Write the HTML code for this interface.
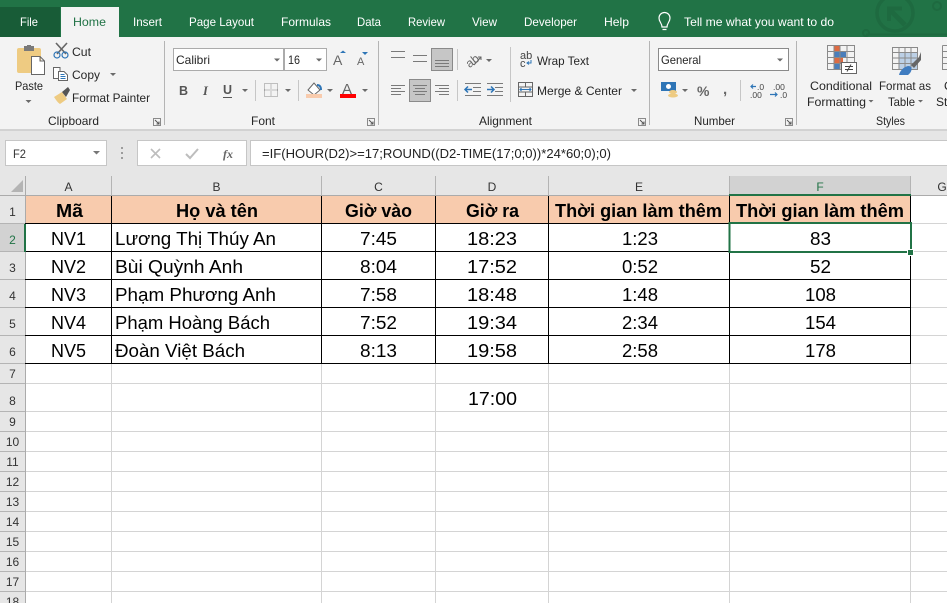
<!DOCTYPE html>
<html><head><meta charset="utf-8"><style>
html,body{margin:0;padding:0;background:#fff;width:947px;height:603px;overflow:hidden}
svg{display:block}
text{font-family:"Liberation Sans",sans-serif}
.t{font-size:12px;fill:#fff}
.r{font-size:12px;fill:#262626}
.c{font-size:18.5px;fill:#000}
.b{font-size:18.5px;fill:#000;font-weight:bold}
.h{font-size:12px;fill:#333;text-anchor:middle}
.ic{fill:none;stroke:#7a7a7a;stroke-width:1}
.sep{stroke:#c6c6c6;stroke-width:1}
.sep2{stroke:#b4b4b4;stroke-width:1}
.ar{fill:#6a6a6a}
</style></head><body>
<svg width="947" height="603" viewBox="0 0 947 603" xmlns="http://www.w3.org/2000/svg">
<rect width="947" height="603" fill="#fff"/>
<!-- title tabs -->
<rect width="947" height="37" fill="#217346"/>
<rect x="0" y="7" width="60" height="30" fill="#185c37"/>
<rect x="61" y="7" width="58" height="30" fill="#f3f3f3"/>
<g fill="none" stroke="#1e6a40" stroke-width="3.5">
<circle cx="895" cy="13" r="18"/><path d="M890 10 L905 25" stroke-width="5"/><path d="M889 21 V8.500 H902" stroke-width="4"/>
<path d="M866 34.500 H947" stroke-width="2"/><circle cx="866" cy="33" r="3" stroke-width="2"/><circle cx="937" cy="6" r="4" stroke-width="2"/>
</g>
<text class="t" x="20" y="26" textLength="18" lengthAdjust="spacingAndGlyphs">File</text>
<text class="t" x="73" y="26" textLength="33" lengthAdjust="spacingAndGlyphs" style="fill:#217346">Home</text>
<text class="t" x="133" y="26" textLength="29" lengthAdjust="spacingAndGlyphs">Insert</text>
<text class="t" x="189" y="26" textLength="65" lengthAdjust="spacingAndGlyphs">Page Layout</text>
<text class="t" x="281" y="26" textLength="50" lengthAdjust="spacingAndGlyphs">Formulas</text>
<text class="t" x="357" y="26" textLength="24" lengthAdjust="spacingAndGlyphs">Data</text>
<text class="t" x="408" y="26" textLength="37" lengthAdjust="spacingAndGlyphs">Review</text>
<text class="t" x="472" y="26" textLength="25" lengthAdjust="spacingAndGlyphs">View</text>
<text class="t" x="524" y="26" textLength="53" lengthAdjust="spacingAndGlyphs">Developer</text>
<text class="t" x="604" y="26" textLength="25" lengthAdjust="spacingAndGlyphs">Help</text>
<text class="t" x="684" y="26" textLength="150" lengthAdjust="spacingAndGlyphs">Tell me what you want to do</text>
<path d="M662 27 C662 23 659 22 659 18 A5.500 5.500 0 0 1 670 18 C670 22 667 23 667 27 Z M662.500 29.500 H666.500" fill="none" stroke="#fff" stroke-width="1.200"/>
<!-- ribbon -->
<rect y="37" width="947" height="92" fill="#f3f3f3"/>
<rect y="129" width="947" height="2" fill="#d2d2d2"/>
<rect y="131" width="947" height="45" fill="#e6e6e6"/>
<!-- paste -->
<rect x="17" y="48" width="24" height="25" rx="2" fill="#eecb82"/>
<rect x="24" y="46" width="10" height="5" fill="#7a7a7a"/><rect x="27" y="45" width="4" height="3" fill="#7a7a7a"/>
<path d="M31.500 56.500 H40 L44.500 61 V74.500 H31.500 Z M40 56.500 V61 H44.500" fill="#fff" stroke="#666"/>
<text class="r" x="15" y="90" textLength="28" lengthAdjust="spacingAndGlyphs">Paste</text>
<path d="M25.500 100 h6 l-3 3z" class="ar"/>
<!-- cut -->
<path d="M56 43 L66 54 M67 43 L57 54" stroke="#666" stroke-width="1.600" fill="none"/>
<circle cx="57" cy="55" r="3" fill="none" stroke="#2e75b6" stroke-width="1.200"/><circle cx="65" cy="55" r="3" fill="none" stroke="#2e75b6" stroke-width="1.200"/>
<text class="r" x="72" y="56" textLength="19" lengthAdjust="spacingAndGlyphs">Cut</text>
<!-- copy -->
<path d="M53.500 67.500 H60 V78.500 H53.500 Z" fill="#fff" stroke="#666"/><path d="M58.500 71.500 H64 L67.500 75 V80.500 H58.500 Z" fill="#fff" stroke="#666"/>
<path d="M60.500 74.500 h4 M60.500 76.500 h5 M60.500 78.500 h5" stroke="#2e75b6" fill="none"/>
<text class="r" x="72" y="79" textLength="28" lengthAdjust="spacingAndGlyphs">Copy</text>
<path d="M110 73 h6 l-3 3z" class="ar"/>
<!-- painter -->
<path d="M54 97 L62 92 L67 99 L60 104 C58 103 56 100 54 97Z" fill="#eecb82"/>
<path d="M62 92 L68 87 L70 90 L66 97 Z" fill="#555"/>
<text class="r" x="72" y="102" textLength="78" lengthAdjust="spacingAndGlyphs">Format Painter</text>
<text class="r" x="48" y="125" textLength="51" lengthAdjust="spacingAndGlyphs">Clipboard</text>
<path d="M153.500 118.500 h7 v7 h-7 z" fill="none" stroke="#8a8a8a"/><path d="M155 120 l4 4 M159 121.500 V124 H156.500" fill="none" stroke="#555"/>
<line class="sep2" x1="164.500" y1="41" x2="164.500" y2="125"/>
<!-- font -->
<rect x="173.500" y="48.500" width="110" height="22" fill="#fff" stroke="#ababab"/>
<rect x="284.500" y="48.500" width="42" height="22" fill="#fff" stroke="#ababab"/>
<text x="176" y="64" font-size="12" fill="#262626" textLength="34" lengthAdjust="spacingAndGlyphs">Calibri</text>
<text x="288" y="64" font-size="12" fill="#262626" textLength="12" lengthAdjust="spacingAndGlyphs">16</text>
<path d="M274 58.500 h6 l-3 3z M316 58.500 h6 l-3 3z" class="ar"/>
<text x="179" y="95" font-size="12.500" font-weight="bold" fill="#555">B</text>
<text x="203" y="95" font-size="12.500" font-style="italic" fill="#555" style="font-family:'Liberation Serif',serif;font-weight:bold">I</text>
<text x="223" y="94" font-size="12.500" font-weight="bold" fill="#555">U</text><path d="M223 97.500 h9" stroke="#555" fill="none"/>
<path d="M242 89 h6 l-3 3z" class="ar"/>
<line class="sep" x1="255.500" y1="80" x2="255.500" y2="101"/>
<path d="M264.500 83.500 h13 v13 h-13 z M271 83.500 v13 M264.500 90 h13" fill="none" stroke="#888" stroke-dasharray="1 1"/>
<path d="M285 89 h6 l-3 3z" class="ar"/>
<line class="sep" x1="298.500" y1="80" x2="298.500" y2="101"/>
<path d="M308 90 L314 83 L320 90 L314 95 Z" fill="#fff" stroke="#666"/><path d="M317 85 q4 0 4 5" stroke="#2e75b6" stroke-width="2" fill="none"/>
<rect x="306" y="94" width="16" height="4" fill="#f8cbad"/>
<path d="M327 89 h6 l-3 3z" class="ar"/>
<text x="333" y="65" font-size="14" fill="#666">A</text><path d="M340 53 l3 -2.500 l3 2.500z" fill="#2e75b6"/>
<text x="357" y="65" font-size="11" fill="#666">A</text><path d="M362 52 h6 l-3 3z" fill="#2e75b6"/>
<text x="342" y="94" font-size="15" fill="#666">A</text><rect x="340" y="94" width="16" height="4" fill="#f00"/>
<path d="M362 89 h6 l-3 3z" class="ar"/>
<text class="r" x="251" y="125" textLength="24" lengthAdjust="spacingAndGlyphs">Font</text>
<path d="M367.500 118.500 h7 v7 h-7 z" fill="none" stroke="#8a8a8a"/><path d="M369 120 l4 4 M373 121.500 V124 H370.500" fill="none" stroke="#555"/>
<line class="sep2" x1="378.500" y1="41" x2="378.500" y2="125"/>
<!-- alignment -->
<rect x="431.500" y="48.500" width="21" height="22" fill="#c6c6c6" stroke="#8a8a8a"/>
<rect x="409.500" y="79.500" width="21" height="22" fill="#c6c6c6" stroke="#8a8a8a"/>
<path d="M391 51.500 h14 M391 57.500 h14 M413 55.500 h14 M413 61.500 h14 M435 60.500 h14 M435 63.500 h14 M435 66.500 h14" class="ic"/>
<path d="M391 85.500 h14 M391 88.500 h10 M391 91.500 h14 M391 94.500 h10" class="ic"/>
<path d="M413 85.500 h14 M415 88.500 h10 M413 91.500 h14 M415 94.500 h10" class="ic"/>
<path d="M435 85.500 h14 M439 88.500 h10 M435 91.500 h14 M439 94.500 h10" class="ic"/>
<line class="sep" x1="457.500" y1="49" x2="457.500" y2="70"/><line class="sep" x1="457.500" y1="80" x2="457.500" y2="101"/>
<text x="465" y="65" font-size="12" fill="#666" transform="rotate(-38 472 60)">ab</text><path d="M474 65 L481 57 M478 57 h3 v3" fill="none" stroke="#666"/>
<path d="M486 59 h6 l-3 3z" class="ar"/>
<path d="M465 83.500 h16 M473 87.500 h8 M473 91.500 h8 M465 95.500 h16" class="ic"/><path d="M472 89.500 h-7 M468 86.500 l-3 3 l3 3" stroke="#2e75b6" stroke-width="1.500" fill="none"/>
<path d="M487 83.500 h16 M495 87.500 h8 M495 91.500 h8 M487 95.500 h16" class="ic"/><path d="M487 89.500 h7 M491 86.500 l3 3 l-3 3" stroke="#2e75b6" stroke-width="1.500" fill="none"/>
<line class="sep" x1="510.500" y1="47" x2="510.500" y2="102"/>
<text x="520" y="59" font-size="11" fill="#444">ab</text><text x="520" y="67" font-size="11" fill="#444">c</text>
<path d="M531 60 v3 h-4 M529 61.500 l-2 1.500 l2 1.500" stroke="#2e75b6" fill="none"/>
<text class="r" x="537" y="65" textLength="52" lengthAdjust="spacingAndGlyphs">Wrap Text</text>
<path d="M518.500 82.500 h14 v14 h-14 z M518.500 87 h14 M518.500 92 h14 M525.500 82.500 v4 M525.500 92 v4" fill="none" stroke="#666"/>
<path d="M520 89.500 h11 M521.500 88 l-1.500 1.500 l1.500 1.500 M529.500 88 l1.500 1.500 l-1.500 1.500" stroke="#2e75b6" fill="none"/>
<text class="r" x="537" y="95" textLength="85" lengthAdjust="spacingAndGlyphs">Merge &amp; Center</text>
<path d="M631 89 h6 l-3 3z" class="ar"/>
<text class="r" x="479" y="125" textLength="53" lengthAdjust="spacingAndGlyphs">Alignment</text>
<path d="M638.500 118.500 h7 v7 h-7 z" fill="none" stroke="#8a8a8a"/><path d="M640 120 l4 4 M644 121.500 V124 H641.500" fill="none" stroke="#555"/>
<line class="sep2" x1="649.500" y1="41" x2="649.500" y2="125"/>
<!-- number -->
<rect x="658.500" y="48.500" width="130" height="22" fill="#fff" stroke="#8a8a8a"/>
<text x="661" y="64" font-size="12" fill="#262626" textLength="40" lengthAdjust="spacingAndGlyphs">General</text>
<path d="M777 58.500 h6 l-3 3z" class="ar"/>
<rect x="661" y="82" width="15" height="9" fill="#2e75b6"/><circle cx="668.500" cy="86.500" r="2.500" fill="#fff"/>
<ellipse cx="673" cy="92" rx="4" ry="2" fill="#eecb82"/><ellipse cx="673" cy="95.500" rx="5" ry="2" fill="#eecb82"/>
<path d="M682 89 h6 l-3 3z" class="ar"/>
<text x="697" y="96" font-size="14" font-weight="bold" fill="#666">%</text>
<text x="723" y="94" font-size="15" font-weight="bold" fill="#666">,</text>
<line class="sep" x1="740.500" y1="80" x2="740.500" y2="101"/>
<text x="757" y="90" font-size="8.500" fill="#444">.0</text><text x="750" y="98" font-size="8.500" fill="#444">.00</text>
<path d="M756 86.500 h-5 M753 84.500 l-2 2 l2 2" stroke="#2e75b6" stroke-width="1.200" fill="none"/>
<text x="773" y="90" font-size="8.500" fill="#444">.00</text><text x="780" y="98" font-size="8.500" fill="#444">.0</text>
<path d="M770 94.500 h7 M775 92.500 l2 2 l-2 2" stroke="#2e75b6" stroke-width="1.200" fill="none"/>
<text class="r" x="694" y="125" textLength="41" lengthAdjust="spacingAndGlyphs">Number</text>
<path d="M785.500 118.500 h7 v7 h-7 z" fill="none" stroke="#8a8a8a"/><path d="M787 120 l4 4 M791 121.500 V124 H788.500" fill="none" stroke="#555"/>
<line class="sep2" x1="796.500" y1="41" x2="796.500" y2="125"/>
<!-- styles -->
<rect x="834" y="46" width="6" height="5" fill="#dd6b43"/><rect x="834" y="52" width="12" height="5" fill="#4a7ebb"/><rect x="834" y="58" width="9" height="5" fill="#dd6b43"/><rect x="834" y="64" width="6" height="5" fill="#4a7ebb"/>
<path d="M827.500 45.500 h27 v24 h-27 z M834 45.500 v24 M840 45.500 v24 M847 45.500 v24 M827.500 51.500 h27 M827.500 57.500 h27 M827.500 63.500 h27" fill="none" stroke="#8a8a8a"/>
<rect x="841.500" y="62.500" width="15" height="11" fill="#fff" stroke="#666"/>
<path d="M845 66.500 h8 M845 69.500 h8 M851 64.500 l-4 7" fill="none" stroke="#444"/>
<rect x="899" y="52" width="19" height="17" fill="#bcd0e6"/>
<path d="M892.500 47.500 h25 v22 h-25 z M892.500 52.500 h25 M892.500 58 h25 M892.500 63.500 h25 M899 47.500 v22 M905 47.500 v22 M911 47.500 v22" fill="none" stroke="#8a8a8a"/>
<path d="M911 65 L919 57 L921 52 L921 60 L914 68 Z" fill="#666"/>
<path d="M899 75 C900 70 905 66 909 66 C913 67 912 72 908 75 Z" fill="#3f7cc0"/>
<text class="r" x="810" y="90" textLength="62" lengthAdjust="spacingAndGlyphs">Conditional</text>
<text class="r" x="807" y="106" textLength="59" lengthAdjust="spacingAndGlyphs">Formatting</text>
<path d="M868.500 100 h5 l-2.500 2.500z" class="ar"/>
<text class="r" x="879" y="90" textLength="52" lengthAdjust="spacingAndGlyphs">Format as</text>
<text class="r" x="888" y="106" textLength="27" lengthAdjust="spacingAndGlyphs">Table</text>
<path d="M918 100 h5 l-2.500 2.500z" class="ar"/>
<path d="M942.500 45.500 H947 M942.500 45.500 V69.500 H947 M942.500 51.500 H947 M942.500 57.500 H947 M942.500 63.500 H947" fill="none" stroke="#8a8a8a"/>
<text class="r" x="944" y="90">C</text>
<text class="r" x="936" y="106">St</text>
<text class="r" x="876" y="125" textLength="29" lengthAdjust="spacingAndGlyphs">Styles</text>
<!-- formula bar -->
<rect x="5.500" y="140.500" width="101" height="25" fill="#fff" stroke="#c6c6c6"/>
<text x="13" y="158" font-size="12" fill="#333" textLength="13" lengthAdjust="spacingAndGlyphs">F2</text>
<path d="M93 151 h7 l-3.500 3.500z" fill="#777"/>
<path d="M122 147 v2 M122 152 v2 M122 157 v2" stroke="#9c9c9c" stroke-width="2" fill="none"/>
<rect x="137.500" y="140.500" width="109" height="25" fill="#fff" stroke="#c6c6c6"/>
<rect x="250.500" y="140.500" width="700" height="25" fill="#fff" stroke="#c6c6c6"/>
<path d="M151 149 L160 158 M160 149 L151 158" stroke="#bdbdbd" stroke-width="1.600" fill="none"/>
<path d="M186 154 L190 158 L198 149" stroke="#bdbdbd" stroke-width="2" fill="none"/>
<text x="223" y="158" font-size="12" font-style="italic" font-weight="bold" fill="#666" style="font-family:'Liberation Serif',serif">fx</text>
<text x="262" y="158" font-size="12.500" fill="#222" textLength="349" lengthAdjust="spacingAndGlyphs">=IF(HOUR(D2)&gt;=17;ROUND((D2-TIME(17;0;0))*24*60;0);0)</text>
<!-- headers -->
<rect x="0" y="176" width="947" height="20" fill="#e6e6e6"/>
<rect x="0" y="176" width="25" height="427" fill="#e6e6e6"/>
<path d="M11 192 L23 192 L23 180 Z" fill="#b4b4b4"/>
<rect x="729" y="176" width="181" height="19" fill="#d2d2d2"/>
<rect x="0" y="224" width="25" height="28" fill="#d2d2d2"/>
<path d="M0 195.500 H947" stroke="#ababab"/>
<path d="M25.500 176 V603" stroke="#ababab"/>
<path d="M111.500 176 V195 M321.500 176 V195 M435.500 176 V195 M548.500 176 V195 M729.500 176 V195 M910.500 176 V195" stroke="#b4b4b4"/>
<path d="M0 223.500 H25 M0 251.500 H25 M0 279.500 H25 M0 307.500 H25 M0 335.500 H25 M0 363.500 H25 M0 383.500 H25 M0 411.500 H25 M0 431.500 H25 M0 451.500 H25 M0 471.500 H25 M0 491.500 H25 M0 511.500 H25 M0 531.500 H25 M0 551.500 H25 M0 571.500 H25 M0 591.500 H25" stroke="#b4b4b4"/>
<text class="h" x="68.500" y="191">A</text><text class="h" x="216.500" y="191">B</text><text class="h" x="378.500" y="191">C</text><text class="h" x="492" y="191">D</text><text class="h" x="639" y="191">E</text><text class="h" x="820" y="191" style="fill:#217346">F</text><text class="h" x="942" y="191">G</text>
<text class="h" x="12.500" y="216">1</text><text class="h" x="12.500" y="244" style="fill:#217346">2</text><text class="h" x="12.500" y="272">3</text><text class="h" x="12.500" y="300">4</text><text class="h" x="12.500" y="328">5</text><text class="h" x="12.500" y="356">6</text><text class="h" x="12.500" y="378">7</text><text class="h" x="12.500" y="405">8</text><text class="h" x="12.500" y="426">9</text><text class="h" x="12.500" y="446">10</text><text class="h" x="12.500" y="466">11</text><text class="h" x="12.500" y="486">12</text><text class="h" x="12.500" y="506">13</text><text class="h" x="12.500" y="526">14</text><text class="h" x="12.500" y="546">15</text><text class="h" x="12.500" y="566">16</text><text class="h" x="12.500" y="586">17</text><text class="h" x="12.500" y="606">18</text>
<!-- grid -->
<path d="M26 383.500 H947 M26 411.500 H947 M26 431.500 H947 M26 451.500 H947 M26 471.500 H947 M26 491.500 H947 M26 511.500 H947 M26 531.500 H947 M26 551.500 H947 M26 571.500 H947 M26 591.500 H947" stroke="#d4d4d4"/>
<path d="M911 223.500 H947 M911 251.500 H947 M911 279.500 H947 M911 307.500 H947 M911 335.500 H947 M911 363.500 H947" stroke="#d4d4d4"/>
<path d="M111.500 364 V603 M321.500 364 V603 M435.500 364 V603 M548.500 364 V603 M729.500 364 V603 M910.500 364 V603" stroke="#d4d4d4"/>
<rect x="26" y="196" width="885" height="27" fill="#f8cbad"/>
<path d="M25 223.500 H911 M25 251.500 H911 M25 279.500 H911 M25 307.500 H911 M25 335.500 H911 M25 363.500 H911 M111.500 196 V364 M321.500 196 V364 M435.500 196 V364 M548.500 196 V364 M729.500 196 V364 M910.500 196 V364" stroke="#000" fill="none"/>
<!-- header row -->
<text class="b" x="56" y="217" textLength="27" lengthAdjust="spacingAndGlyphs">Mã</text>
<text class="b" x="176" y="217" textLength="82" lengthAdjust="spacingAndGlyphs">Họ và tên</text>
<text class="b" x="345" y="217" textLength="67" lengthAdjust="spacingAndGlyphs">Giờ vào</text>
<text class="b" x="466" y="217" textLength="53" lengthAdjust="spacingAndGlyphs">Giờ ra</text>
<text class="b" x="555" y="217" textLength="167" lengthAdjust="spacingAndGlyphs">Thời gian làm thêm</text>
<text class="b" x="736" y="217" textLength="168" lengthAdjust="spacingAndGlyphs">Thời gian làm thêm</text>
<!-- data -->
<text class="c" x="51" y="245" textLength="35" lengthAdjust="spacingAndGlyphs">NV1</text>
<text class="c" x="115" y="245" textLength="161" lengthAdjust="spacingAndGlyphs">Lương Thị Thúy An</text>
<text class="c" x="360" y="245" textLength="37" lengthAdjust="spacingAndGlyphs">7:45</text>
<text class="c" x="467" y="245" textLength="50" lengthAdjust="spacingAndGlyphs">18:23</text>
<text class="c" x="622" y="245" textLength="36" lengthAdjust="spacingAndGlyphs">1:23</text>
<text class="c" x="810" y="245" textLength="21" lengthAdjust="spacingAndGlyphs">83</text>
<text class="c" x="51" y="273" textLength="35" lengthAdjust="spacingAndGlyphs">NV2</text>
<text class="c" x="115" y="273" textLength="128" lengthAdjust="spacingAndGlyphs">Bùi Quỳnh Anh</text>
<text class="c" x="360" y="273" textLength="37" lengthAdjust="spacingAndGlyphs">8:04</text>
<text class="c" x="467" y="273" textLength="50" lengthAdjust="spacingAndGlyphs">17:52</text>
<text class="c" x="622" y="273" textLength="36" lengthAdjust="spacingAndGlyphs">0:52</text>
<text class="c" x="810" y="273" textLength="21" lengthAdjust="spacingAndGlyphs">52</text>
<text class="c" x="51" y="301" textLength="35" lengthAdjust="spacingAndGlyphs">NV3</text>
<text class="c" x="115" y="301" textLength="161" lengthAdjust="spacingAndGlyphs">Phạm Phương Anh</text>
<text class="c" x="360" y="301" textLength="37" lengthAdjust="spacingAndGlyphs">7:58</text>
<text class="c" x="467" y="301" textLength="50" lengthAdjust="spacingAndGlyphs">18:48</text>
<text class="c" x="622" y="301" textLength="36" lengthAdjust="spacingAndGlyphs">1:48</text>
<text class="c" x="805" y="301" textLength="31" lengthAdjust="spacingAndGlyphs">108</text>
<text class="c" x="51" y="329" textLength="35" lengthAdjust="spacingAndGlyphs">NV4</text>
<text class="c" x="115" y="329" textLength="155" lengthAdjust="spacingAndGlyphs">Phạm Hoàng Bách</text>
<text class="c" x="360" y="329" textLength="37" lengthAdjust="spacingAndGlyphs">7:52</text>
<text class="c" x="467" y="329" textLength="50" lengthAdjust="spacingAndGlyphs">19:34</text>
<text class="c" x="622" y="329" textLength="36" lengthAdjust="spacingAndGlyphs">2:34</text>
<text class="c" x="805" y="329" textLength="31" lengthAdjust="spacingAndGlyphs">154</text>
<text class="c" x="51" y="357" textLength="35" lengthAdjust="spacingAndGlyphs">NV5</text>
<text class="c" x="115" y="357" textLength="130" lengthAdjust="spacingAndGlyphs">Đoàn Việt Bách</text>
<text class="c" x="360" y="357" textLength="37" lengthAdjust="spacingAndGlyphs">8:13</text>
<text class="c" x="467" y="357" textLength="50" lengthAdjust="spacingAndGlyphs">19:58</text>
<text class="c" x="622" y="357" textLength="36" lengthAdjust="spacingAndGlyphs">2:58</text>
<text class="c" x="805" y="357" textLength="31" lengthAdjust="spacingAndGlyphs">178</text>
<text class="c" x="468" y="405" textLength="49" lengthAdjust="spacingAndGlyphs">17:00</text>
<!-- selection -->
<rect x="729" y="194" width="182" height="2" fill="#217346"/>
<rect x="24" y="224" width="2" height="28" fill="#217346"/>
<rect x="729.500" y="223" width="181.500" height="29" fill="none" stroke="#217346" stroke-width="2"/>
<rect x="907" y="249" width="7" height="7" fill="#fff"/>
<rect x="908" y="250" width="5" height="5" fill="#217346"/>
</svg>
</body></html>
